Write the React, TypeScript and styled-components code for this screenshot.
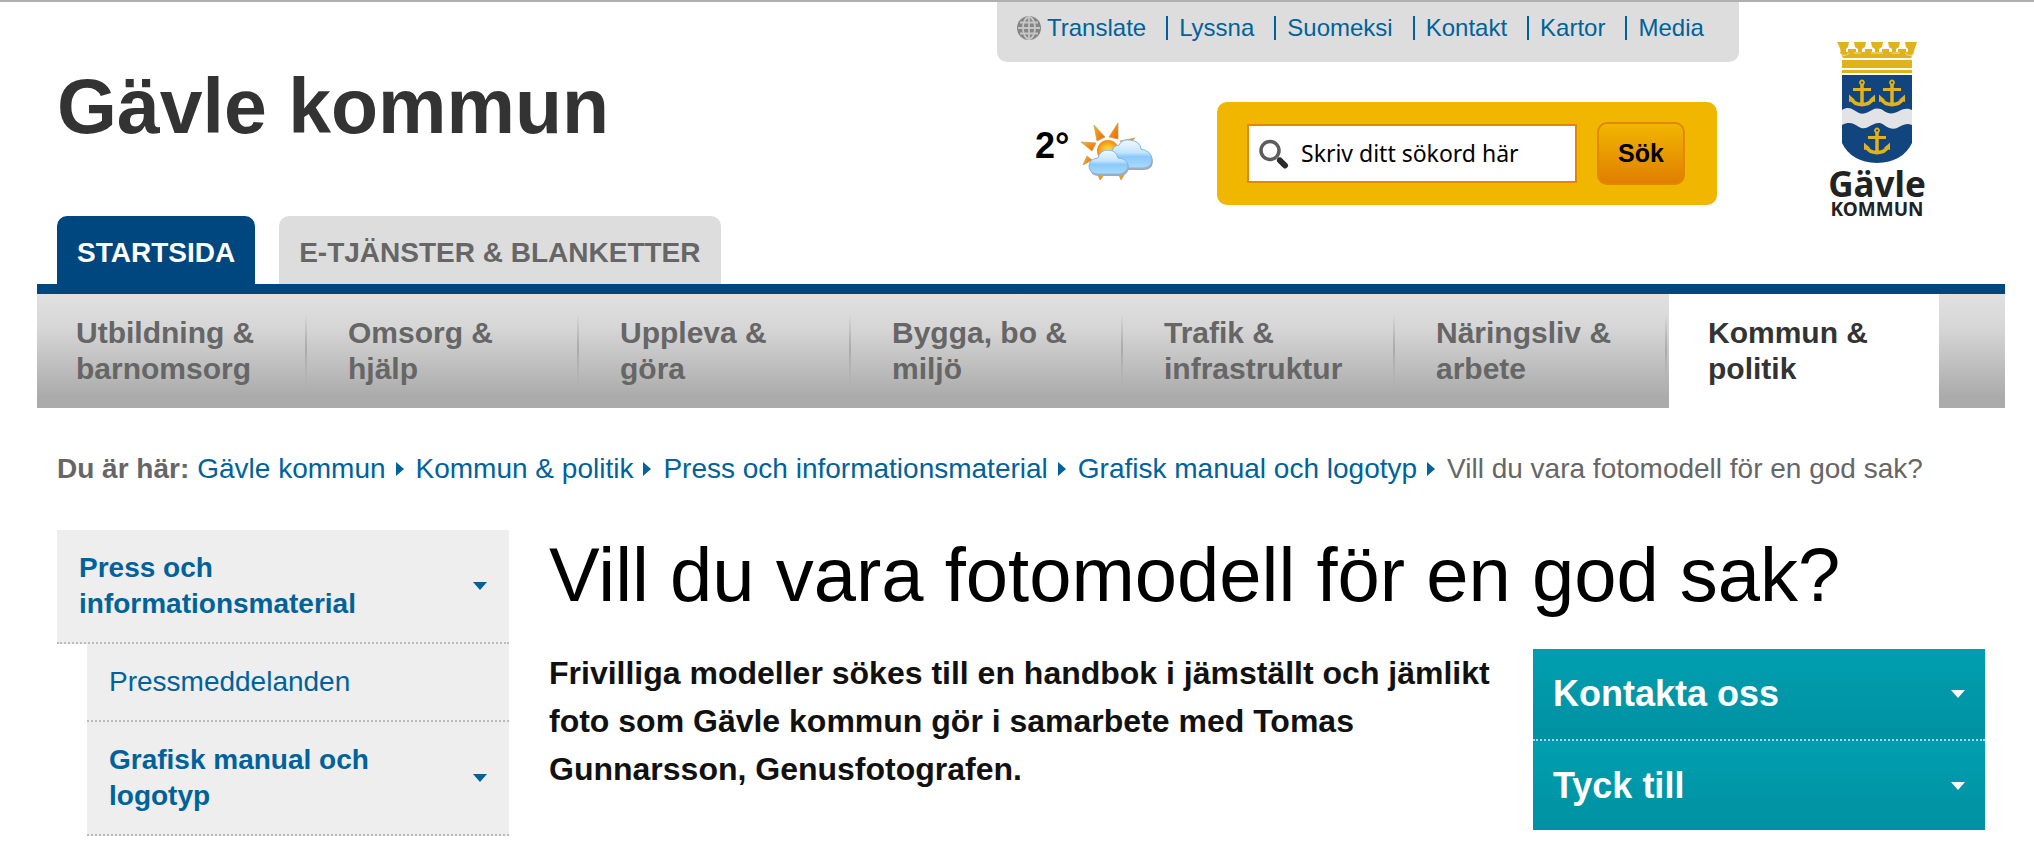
import React from "react";
import styled, { createGlobalStyle } from "styled-components";

const GlobalStyle = createGlobalStyle`
  *, *::before, *::after { box-sizing: border-box; }
  body {
    margin: 0;
    background: #fff;
    color: #111;
    font-family: "Liberation Sans", Arial, Helvetica, sans-serif;
  }
  a { color: inherit; text-decoration: none; }
  h1, p, ul, ol { margin: 0; padding: 0; }
  ul, ol { list-style: none; }
  button, input { font: inherit; }
`;

const Page = styled.div`
  border-top: 2px solid #b0b0b0;
  padding: 0 29px 0 37px;
`;

const Header = styled.header`
  display: flex;
  justify-content: space-between;
  height: 214px;
  padding: 0 78px 0 20px;
`;

const SiteName = styled.p`
  padding-top: 60px;
  font-size: 77px;
  line-height: 88px;
  font-weight: bold;
  color: #333;
`;

const HeaderTools = styled.div`
  display: flex;
  align-items: flex-start;
  gap: 90px;
`;

const ToolColumn = styled.div`
  display: flex;
  flex-direction: column;
`;

const TopLinks = styled.ul`
  display: flex;
  width: 742px;
  height: 60px;
  padding: 13px 20px;
  background: #ddd;
  border-radius: 0 0 10px 10px;
  color: #00629b;
  font-size: 24px;
  line-height: 26px;
`;

const TopLink = styled.li`
  display: flex;
  align-items: center;
  gap: 6px;
  height: 26px;
  white-space: nowrap;

  & + & {
    margin-left: 20px;
  }

  & + &::before {
    content: "";
    width: 2px;
    height: 24px;
    margin-right: 5px;
    background: #00629b;
  }
`;

const SearchRow = styled.div`
  display: flex;
  justify-content: space-between;
  margin-top: 40px;
  padding: 0 22px 0 38px;
`;

const Weather = styled.div`
  display: flex;
  gap: 11px;
  padding-top: 20px;
  color: #000;
  font-size: 36px;
  line-height: 48px;
  font-weight: bold;
`;

const SearchForm = styled.form`
  display: flex;
  align-items: center;
  gap: 20px;
  width: 500px;
  height: 103px;
  padding: 0 32px 0 30px;
  background: #f1b600;
  border-radius: 10px;
`;

const SearchField = styled.div`
  display: flex;
  flex: 1;
  align-items: center;
  gap: 12px;
  min-width: 0;
  height: 59px;
  padding: 0 10px;
  background: #fff;
  border: 2px solid #e38600;
`;

const SearchInput = styled.input`
  flex: 1;
  min-width: 0;
  height: 48px;
  padding: 0 0 2px;
  border: 0;
  outline: 0;
  background: none;
  color: #000;
  font-family: "Noto Sans", "Open Sans", sans-serif;
  font-size: 23px;
`;

const SearchButton = styled.button`
  width: 88px;
  height: 63px;
  padding: 0;
  border: 2px solid #e38600;
  border-radius: 10px;
  background: linear-gradient(#f1b600, #e07f00);
  color: #000;
  font-size: 25px;
  font-weight: bold;
`;

const Tabs = styled.ul`
  display: flex;
  gap: 24px;
  padding-left: 20px;
`;

const Tab = styled.a<{ $active?: boolean }>`
  display: block;
  height: 68px;
  padding: 0 20px;
  border-radius: 10px 10px 0 0;
  background: ${(p) => (p.$active ? "#00467f" : "#ddd")};
  color: ${(p) => (p.$active ? "#fff" : "#666")};
  font-size: 28px;
  line-height: 73px;
  font-weight: bold;
  text-transform: uppercase;
`;

const MainNav = styled.ul`
  display: flex;
  border-top: 10px solid #00467f;
  background: linear-gradient(#e1e1e1, #d6d6d6 30%, #ababab 90%);
`;

const NavItem = styled.li<{ $active?: boolean }>`
  display: flex;
  flex: 0 1 ${(p) => (p.$active ? "270px" : "272px")};
  background: ${(p) => (p.$active ? "#fff" : "none")};

  &::after {
    content: "";
    width: 2px;
    margin: 20px 2px;
    background: ${(p) => (p.$active ? "none" : "linear-gradient(transparent, #aaa 50%, transparent)")};
  }
`;

const NavLink = styled.a<{ $active?: boolean }>`
  flex: 1;
  padding: 21px 0 21px 39px;
  color: ${(p) => (p.$active ? "#333" : "#666")};
  font-size: 30px;
  line-height: 36px;
  font-weight: bold;
  white-space: pre-line;
`;

const Crumbs = styled.ol`
  display: flex;
  padding: 43px 0 0 20px;
  color: #666;
  font-size: 28px;
  line-height: 36px;
  white-space: nowrap;
`;

const Crumb = styled.li`
  display: flex;
  align-items: center;
`;

const CrumbLabel = styled.strong`
  margin-right: 8px;
`;

const CrumbLink = styled.a`
  color: #00629b;
`;

const CrumbArrow = styled.span`
  margin: 0 12px 0 10px;
  border: solid transparent;
  border-width: 7px 0 7px 8px;
  border-left-color: #00629b;
`;

const Columns = styled.div`
  display: flex;
  gap: 40px;
  padding: 43px 20px 14px 20px;
`;

const SideMenu = styled.ul`
  flex: 0 0 452px;
`;

const SideItem = styled.li<{ $nested?: boolean }>`
  margin-left: ${(p) => (p.$nested ? "30px" : "0")};
  border-bottom: 2px dotted #bbb;
  background: #eee;
`;

const SideLink = styled.a<{ $bold?: boolean }>`
  display: flex;
  align-items: center;
  justify-content: space-between;
  gap: 20px;
  padding: 20px 22px;
  color: #00629b;
  font-size: 28px;
  line-height: 36px;
  font-weight: ${(p) => (p.$bold ? "bold" : "normal")};
`;

const LinkText = styled.span`
  max-width: 300px;
`;

const DownArrow = styled.span`
  border: solid transparent;
  border-width: 8px 7px 0;
  border-top-color: currentColor;
`;

const Main = styled.main`
  flex: 1;
  min-width: 0;
`;

const Heading = styled.h1`
  color: #000;
  font-size: 76px;
  line-height: 90px;
  font-weight: normal;
`;

const MainRow = styled.div`
  display: flex;
  justify-content: space-between;
  gap: 30px;
  padding-top: 29px;
`;

const Intro = styled.p`
  flex: 1;
  font-size: 32px;
  line-height: 48px;
  font-weight: bold;
`;

const ContactBox = styled.div`
  display: flex;
  flex: 0 0 452px;
  flex-direction: column;
`;

const ContactButton = styled.button`
  display: flex;
  align-items: center;
  justify-content: space-between;
  height: 90px;
  padding: 0 20px;
  border: 0;
  background: linear-gradient(#009fb0, #0091a2);
  color: #fff;
  font-size: 36px;
  font-weight: bold;

  & + & {
    height: 91px;
    border-top: 2px dotted #a6dde3;
  }
`;

const GlobeIcon = () => (
  <svg width="24" height="24" viewBox="0 0 24 24" aria-hidden="true">
    <circle cx="12" cy="12" r="12" fill="#858585" />
    <g fill="none" stroke="#c6c6c6" strokeWidth="1.800">
      <path d="M12 1v22M1 12h22M3 6.500h18M3 17.500h18" />
      <ellipse cx="12" cy="12" rx="6" ry="11" />
    </g>
  </svg>
);

const SearchIcon = () => (
  <svg width="30" height="30" viewBox="0 0 30 30" aria-hidden="true">
    <circle cx="11" cy="11.500" r="9" fill="#fff" stroke="#5c5c5c" strokeWidth="3.500" />
    <path d="M17.500 18l3 3" stroke="#777" strokeWidth="3" />
    <path d="M21 21.500l5 5" stroke="#2b2b2b" strokeWidth="6" strokeLinecap="round" />
  </svg>
);

const WeatherIcon = () => (
  <svg width="74" height="60" viewBox="0 0 74 60" aria-hidden="true">
    <defs>
      <linearGradient id="ray" x1="0" y1="0" x2="1" y2="1">
        <stop offset="0" stopColor="#fbb81d" />
        <stop offset="1" stopColor="#e8610a" />
      </linearGradient>
      <radialGradient id="sun">
        <stop offset="0" stopColor="#fff04a" />
        <stop offset="1" stopColor="#f08a10" />
      </radialGradient>
      <linearGradient id="cloud" x1="0" y1="0" x2="0" y2="1">
        <stop offset="0" stopColor="#f0f9ff" />
        <stop offset="0.45" stopColor="#c3e4fd" />
        <stop offset="0.6" stopColor="#8bc9fb" />
        <stop offset="1" stopColor="#a9dafd" />
      </linearGradient>
    </defs>
    <g fill="url(#ray)" stroke="#c9a15a" strokeWidth="0.800">
      <path d="M14 3l11 12-8 4z" />
      <path d="M38 1v16l-9-2z" />
      <path d="M1 20l15 1-4 8z" />
      <path d="M55 16l-9 8-6-5z" />
      <path d="M3 43l4-9 5 4z" />
      <path d="M18 53l6 0-4 5z" />
      <path d="M39 53l5 0-3 5z" />
    </g>
    <circle cx="28" cy="29" r="11" fill="url(#sun)" />
    <path
      d="M40 46q-4-7-8-13-1-9 7-10 3-6 11-5 10 1 11 9 11 2 11 11-1 8-9 8z"
      transform="translate(1 2)"
      fill="#a9a9a9"
    />
    <path
      d="M40 46q-4-7-8-13-1-9 7-10 3-6 11-5 10 1 11 9 11 2 11 11-1 8-9 8z"
      fill="url(#cloud)"
      stroke="#7db9ea"
    />
    <path
      d="M17 52q-8-1-8-8 0-7 9-8 2-8 10-8 8 0 10 8 10 1 10 8-1 7-9 8z"
      transform="translate(1 2)"
      fill="#a9a9a9"
    />
    <path
      d="M17 52q-8-1-8-8 0-7 9-8 2-8 10-8 8 0 10 8 10 1 10 8-1 7-9 8z"
      fill="url(#cloud)"
      stroke="#7db9ea"
    />
  </svg>
);

const Anchor = ({ x, y }: { x: number; y: number }) => (
  <g transform={`translate(${x} ${y})`} fill="none" stroke="#e0b31c">
    <circle cx="0" cy="2.500" r="2" strokeWidth="1.800" />
    <path d="M0 4v22" strokeWidth="3.500" />
    <path d="M-9 9.500H9" strokeWidth="3" />
    <path d="M-11 18.500q3 6 11 6t11-6" strokeWidth="3.800" />
    <path d="M-13 22V14.500l6 5.500zM13 22V14.500l-6 5.500z" fill="#e0b31c" stroke="none" />
  </g>
);

const LogoLink = styled.a`
  display: block;
  padding-top: 39px;
`;

const CrestLogo = () => (
  <svg width="98" height="178" viewBox="0 0 98 178" role="img" aria-label="Gävle kommun">
    <g fill="#e0b31c">
      <path d="M8 1h12l-1 5-2 2v5h-5l-1-6zM25 1h12l-1 5-3 2v5h-4V8l-3-2zM42 1h12l-1 5-3 2v5h-4V8l-3-2zM59 1h12l-1 5-3 2v5h-4V8l-3-2zM76 1h12l-2 6-2 6h-5V8l-2-2z" />
      <path d="M19 8h8v5h-8zM36 8h7v5h-7zM53 8h7v5h-7zM69 8h8v5h-8z" />
      <path d="M11 11h74l-3 6H14z" />
      <path d="M13 19h70v8H13zM13 29h70v3H13z" />
    </g>
    <path d="M11 12q4 5 9 0M25 12h7M42 12h12M63 12h8M76 12q5 5 9 0" fill="none" stroke="#f1dc98" />
    <path d="M13 34h70v68q-9 19-35 20-26-1-35-20z" fill="#12457e" />
    <path d="M13 69c8-5 12 1 17 3s9-1 13-3 8-2 12 1 9 3 13 1 9-5 15-2v15c-6-3-11 1-15 3s-9 0-13-3-8-2-12 0-8 5-13 2-9-6-17-2z" fill="#e2e3e5" />
    <Anchor x={33} y={39} />
    <Anchor x={63} y={39} />
    <Anchor x={48} y={87} />
    <g fill="#222" fontFamily="Noto Sans, sans-serif" fontWeight="bold" textAnchor="middle">
      <text x="48" y="156" fontSize="35">Gävle</text>
      <text x="48" y="175" fontSize="19">KOMMUN</text>
    </g>
  </svg>
);

const topLinks = ["Translate", "Lyssna", "Suomeksi", "Kontakt", "Kartor", "Media"];

const navItems = [
  "Utbildning &\nbarnomsorg",
  "Omsorg &\nhjälp",
  "Uppleva &\ngöra",
  "Bygga, bo &\nmiljö",
  "Trafik &\ninfrastruktur",
  "Näringsliv &\narbete",
  "Kommun &\npolitik",
];

const crumbs = [
  "Gävle kommun",
  "Kommun & politik",
  "Press och informationsmaterial",
  "Grafisk manual och logotyp",
];

const sideItems = [
  { text: "Press och informationsmaterial", open: true, nested: false },
  { text: "Pressmeddelanden", open: false, nested: true },
  { text: "Grafisk manual och logotyp", open: true, nested: true },
];

export default function App() {
  return (
    <>
      <GlobalStyle />
      <Page>
        <Header>
          <SiteName>Gävle kommun</SiteName>
          <HeaderTools>
            <ToolColumn>
              <TopLinks>
                {topLinks.map((label, i) => (
                  <TopLink key={label}>
                    {i === 0 && <GlobeIcon />}
                    <a href="#">{label}</a>
                  </TopLink>
                ))}
              </TopLinks>
              <SearchRow>
                <Weather>
                  <span>2°</span>
                  <WeatherIcon />
                </Weather>
                <SearchForm onSubmit={(e) => e.preventDefault()}>
                  <SearchField>
                    <SearchIcon />
                    <SearchInput type="text" aria-label="Sökord" defaultValue="Skriv ditt sökord här" />
                  </SearchField>
                  <SearchButton type="submit">Sök</SearchButton>
                </SearchForm>
              </SearchRow>
            </ToolColumn>
            <LogoLink href="#">
              <CrestLogo />
            </LogoLink>
          </HeaderTools>
        </Header>

        <nav>
          <Tabs>
            <li><Tab href="#" $active>Startsida</Tab></li>
            <li><Tab href="#">E-tjänster &amp; blanketter</Tab></li>
          </Tabs>
          <MainNav>
            {navItems.map((label, i) => {
              const active = i === navItems.length - 1;
              return (
                <NavItem key={label} $active={active}>
                  <NavLink href="#" $active={active}>{label}</NavLink>
                </NavItem>
              );
            })}
          </MainNav>
        </nav>

        <Crumbs>
          <li><CrumbLabel>Du är här:</CrumbLabel></li>
          {crumbs.map((label) => (
            <Crumb key={label}>
              <CrumbLink href="#">{label}</CrumbLink>
              <CrumbArrow />
            </Crumb>
          ))}
          <Crumb>Vill du vara fotomodell för en god sak?</Crumb>
        </Crumbs>

        <Columns>
          <SideMenu>
            {sideItems.map((item) => (
              <SideItem key={item.text} $nested={item.nested}>
                <SideLink href="#" $bold={item.open}>
                  <LinkText>{item.text}</LinkText>
                  {item.open && <DownArrow />}
                </SideLink>
              </SideItem>
            ))}
          </SideMenu>
          <Main>
            <Heading>Vill du vara fotomodell för en god sak?</Heading>
            <MainRow>
              <Intro>
                Frivilliga modeller sökes till en handbok i jämställt och jämlikt foto som Gävle
                kommun gör i samarbete med Tomas Gunnarsson, Genusfotografen.
              </Intro>
              <ContactBox>
                <ContactButton type="button">Kontakta oss<DownArrow /></ContactButton>
                <ContactButton type="button">Tyck till<DownArrow /></ContactButton>
              </ContactBox>
            </MainRow>
          </Main>
        </Columns>
      </Page>
    </>
  );
}
